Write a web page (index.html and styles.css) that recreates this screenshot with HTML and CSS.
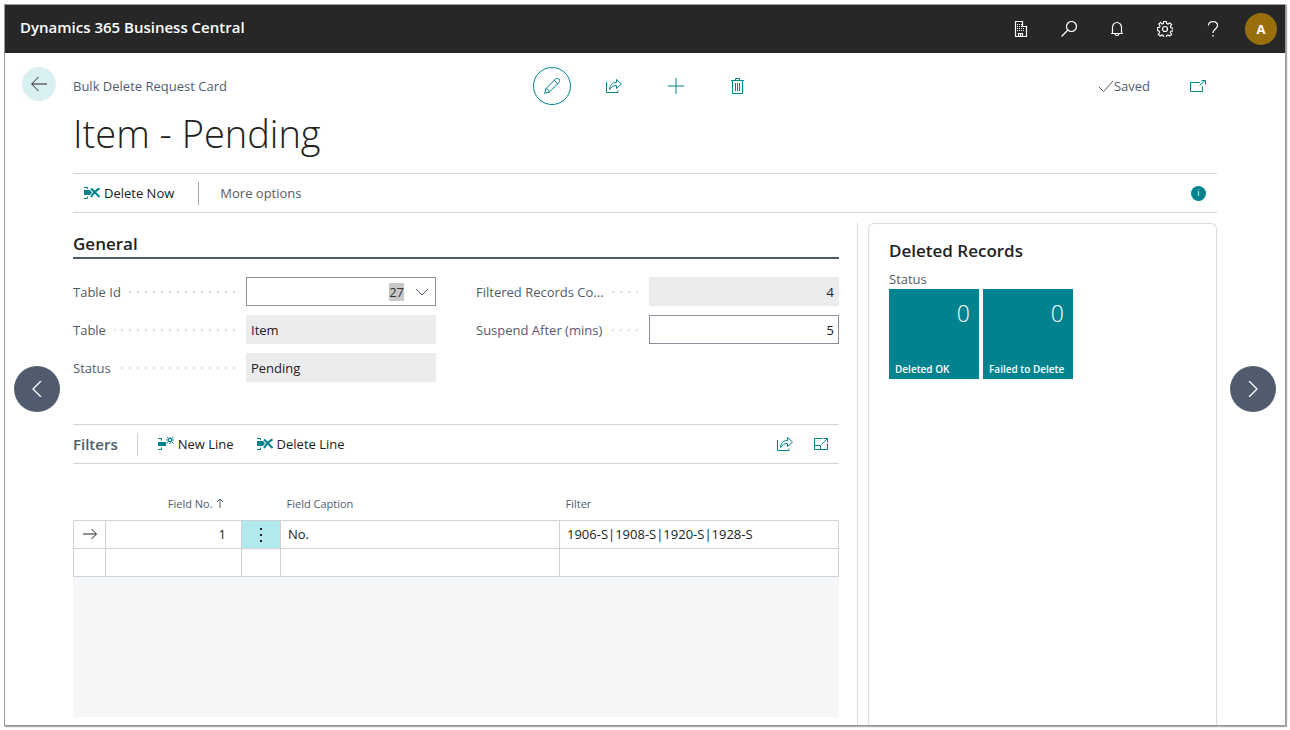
FILE: index.html
```html
<!DOCTYPE html>
<html lang="en">
<head>
  <meta charset="UTF-8">
  <meta name="viewport" content="width=device-width, initial-scale=1">
  <title>Item - Pending - Dynamics 365 Business Central</title>
  <link rel="stylesheet" href="styles.css">
</head>
<body>
  <!-- Shared icons -->
  <svg class="icon-defs" aria-hidden="true">
    <symbol id="icon-share" viewBox="0 0 16 16">
      <path d="M.5 4v10.500h11.500v-2M3.500 11.500c.3-4 2.500-7 7-7V1.500l5 4.500-5 4.500v-3c-3 0-5 1-7 4z"/>
    </symbol>
    <symbol id="icon-delete-line" viewBox="0 0 16 14">
      <path class="fill" d="M0 4h6l2 2.500L6 9H0z"/>
      <path d="M0 1.500h3.500v1.500M0 12.500h3.500V10.500"/>
      <path class="thick" d="M7 2.500l8.500 8.500M15.500 2.500C12 4 9.500 7 7 11"/>
    </symbol>
  </svg>

  <div class="window">
    <header class="topbar">
      <a href="#" class="brand">Dynamics 365 Business Central</a>
      <nav class="topbar-tools">
        <button aria-label="Company">
          <svg viewBox="0 0 16 16"><path d="M2.500 15.500V.5h7v5h4v10zM5.500 15.500v-3h4v3M7.500 12.500v3"/><path class="dots" d="M4 3.500h5M4 5.500h5M4 7.500h8M4 9.500h8"/></svg>
        </button>
        <button aria-label="Search">
          <svg viewBox="0 0 16 16"><circle cx="10.500" cy="5.500" r="5"/><path d="M7 9L.5 15.500"/></svg>
        </button>
        <button aria-label="Notifications">
          <svg viewBox="0 0 16 16"><path d="M2 12.500h12M3.500 12.500V6.500a4.500 5 0 0 1 9 0v6M6 13c.3 2 3.700 2 4 0"/></svg>
        </button>
        <button aria-label="Settings">
          <svg viewBox="0 0 16 16"><path d="M6.700.5h2.600l.4 2.100 1.300.5 1.800-1.200 1.800 1.800-1.200 1.800.5 1.300 2.100.4v2.600l-2.100.4-.5 1.300 1.200 1.800-1.800 1.800-1.800-1.200-1.300.5-.4 2.100H6.700l-.4-2.100-1.300-.5-1.800 1.200-1.800-1.800 1.200-1.800-.5-1.300L.5 9.300V6.700l2-.4.5-1.300-1.200-1.800L3.600 1.400 5 3.100l1.300-.5z"/><circle cx="8" cy="8" r="2.500"/></svg>
        </button>
        <button aria-label="Help">
          <svg viewBox="0 0 16 16"><path d="M3.500 4.500C3.500 2 5.500.6 8 .6s4.500 1.500 4.500 4C12.500 8 8 8 8 12M8 14v1.800"/></svg>
        </button>
        <button aria-label="Account"><span class="avatar">A</span></button>
      </nav>
    </header>

    <div class="page">
      <button class="back" aria-label="Back">
        <svg viewBox="0 0 16 16"><path d="M7.500 1L.7 8l6.800 7M.7 8H16"/></svg>
      </button>
      <button class="pager pager-prev" aria-label="Previous record">
        <svg viewBox="0 0 16 16"><path d="M12 0L4 8l8 8"/></svg>
      </button>
      <button class="pager pager-next" aria-label="Next record">
        <svg viewBox="0 0 16 16"><path d="M4 0l8 8-8 8"/></svg>
      </button>

      <div class="titlebar">
        <span class="caption">Bulk Delete Request Card</span>
        <div class="page-actions">
          <button class="edit" aria-label="Edit">
            <svg viewBox="0 0 16 16"><path d="M.7 15.300l1.200-4.600L11.500 1a2.400 2.400 0 0 1 3.500 3.500L5.300 14.100zM1.900 10.700c1.800.2 3.200 1.600 3.400 3.400M10.200 2.300l3.500 3.500"/></svg>
          </button>
          <button aria-label="Share"><svg><use href="#icon-share"/></svg></button>
          <button aria-label="New"><svg viewBox="0 0 16 16"><path d="M8 0v16M0 8h16"/></svg></button>
          <button aria-label="Delete">
            <svg viewBox="0 0 16 16"><path d="M1 2.500h13M5.500 2.500v-2h4v2M2.500 2.500v13h10v-13M5.500 5v8M7.500 5v8M9.500 5v8"/></svg>
          </button>
        </div>
        <div class="page-state">
          <span class="saved">
            <svg viewBox="0 0 16 16"><path d="M1 9l4.500 4.500L15 3"/></svg>Saved
          </span>
          <button aria-label="Open in new window">
            <svg viewBox="0 0 16 16"><path d="M10 4.500H.5v9h12v-5M9.500 7.500l5.500-5M11.500 2.500h4v4"/></svg>
          </button>
        </div>
      </div>

      <h1>Item - Pending</h1>

      <div class="actionbar">
        <button class="action"><svg><use href="#icon-delete-line"/></svg>Delete Now</button>
        <span class="divider"></span>
        <button class="action more">More options</button>
        <button class="info" aria-label="Toggle FactBox">i</button>
      </div>

      <div class="content">
        <main class="main">
          <h2>General</h2>
          <div class="fields">
            <div class="field-column">
              <div class="field">
                <label for="tableId"><span>Table Id</span></label>
                <div class="lookup">
                  <input id="tableId" class="number" value="27">
                  <button aria-label="Choose a value for Table Id">
                    <svg viewBox="0 0 16 16"><path d="M2 5l6 6 6-6"/></svg>
                  </button>
                </div>
              </div>
              <div class="field">
                <label for="tableName"><span>Table</span></label>
                <input id="tableName" value="Item" readonly>
              </div>
              <div class="field">
                <label for="status"><span>Status</span></label>
                <input id="status" value="Pending" readonly>
              </div>
            </div>
            <div class="field-column">
              <div class="field">
                <label for="recordCount"><span>Filtered Records Co...</span></label>
                <input id="recordCount" class="number" value="4" readonly>
              </div>
              <div class="field">
                <label for="suspendAfter"><span>Suspend After (mins)</span></label>
                <input id="suspendAfter" class="number" value="5">
              </div>
            </div>
          </div>

          <div class="partbar">
            <h3>Filters</h3>
            <span class="divider"></span>
            <button class="action">
              <svg viewBox="0 0 16 14"><path class="fill" d="M0 5h8v4H0z"/><path d="M0 1.500h3.500v2M0 12.500h3.500v-2M10.500 1.500h3v3h-3zM8.500 0l2 1.500M15.500 0l-2 1.500M8.500 6.500l2-2M15.500 6.500l-2-2M12 0v1.500M12 4.500v2.500M8 3h2.500M13.500 3H16"/></svg>New Line
            </button>
            <button class="action"><svg><use href="#icon-delete-line"/></svg>Delete Line</button>
            <div class="part-tools">
              <button aria-label="Share list"><svg><use href="#icon-share"/></svg></button>
              <button aria-label="Focus mode">
                <svg viewBox="0 0 16 16"><path d="M9.500 2.500h-8v11h13v-6M1.500 9.500h6v4M8.500 8.500l6-6M10.500 2.500h4v4"/></svg>
              </button>
            </div>
          </div>

          <table class="lines">
            <colgroup>
              <col class="col-marker"><col class="col-no"><col class="col-menu"><col><col>
            </colgroup>
            <thead>
              <tr>
                <th></th>
                <th class="number">Field No. <svg viewBox="0 0 8 10"><path d="M4 10V1M1 4l3-3 3 3"/></svg></th>
                <th></th>
                <th>Field Caption</th>
                <th>Filter</th>
              </tr>
            </thead>
            <tbody>
              <tr>
                <td class="marker"><svg viewBox="0 0 16 16"><path d="M1 8h13M9.500 3l5 5-5 5"/></svg></td>
                <td class="number">1</td>
                <td class="menu"><button aria-label="Show more options"><svg viewBox="0 0 16 16"><path class="fill" d="M7 2h2v2H7zM7 8h2v2H7zM7 14h2v2H7z"/></svg></button></td>
                <td>No.</td>
                <td>1906-S|1908-S|1920-S|1928-S</td>
              </tr>
              <tr>
                <td></td><td></td><td></td><td></td><td></td>
              </tr>
            </tbody>
          </table>
          <div class="list-space"></div>
        </main>

        <aside class="factbox">
          <h2>Deleted Records</h2>
          <p>Status</p>
          <div class="tiles">
            <a href="#" class="tile"><span class="tile-value">0</span><span class="tile-label">Deleted OK</span></a>
            <a href="#" class="tile"><span class="tile-value">0</span><span class="tile-label">Failed to Delete</span></a>
          </div>
        </aside>
      </div>
    </div>
  </div>

  <script>
    // first editable field starts out selected
    document.getElementById('tableId').select();
  </script>
</body>
</html>
```
FILE: styles.css
```css
* {
  box-sizing: border-box;
}

body {
  margin: 0;
  height: 100vh;
  padding: 4px;
  background: #fff;
  color: #212121;
  font-family: "Segoe UI", "Open Sans", sans-serif;
  font-size: 13px;
  line-height: 20px;
  overflow: hidden;
}

button, input {
  font: inherit;
  color: inherit;
}

button {
  display: flex;
  align-items: center;
  justify-content: center;
  padding: 0;
  border: 0;
  background: none;
  cursor: pointer;
}

svg {
  width: 16px;
  height: 16px;
  flex: none;
  fill: none;
  stroke: currentColor;
  stroke-width: 1;
}

svg .fill {
  fill: currentColor;
  stroke: none;
}

svg .thick {
  stroke-width: 2;
}

svg .dots {
  stroke-dasharray: 1 1;
}

.icon-defs {
  position: absolute;
  width: 0;
  height: 0;
}

.window {
  height: 100%;
  display: flex;
  flex-direction: column;
  border: 1px solid #999;
  box-shadow: 1px 1px 1px #aaa;
  overflow: hidden;
}

/* Top bar */
.topbar {
  display: flex;
  flex: none;
  height: 48px;
  align-items: center;
  justify-content: space-between;
  padding-left: 15px;
  background: #272727;
  color: #fff;
}

.brand {
  padding-bottom: 4px;
  color: inherit;
  font-size: 15px;
  font-weight: 600;
  text-decoration: none;
}

.topbar-tools {
  display: flex;
}

.topbar-tools button {
  width: 48px;
  height: 48px;
}

.topbar-tools svg {
  stroke-width: 1.2;
}

.avatar {
  width: 32px;
  line-height: 32px;
  border-radius: 50%;
  background: #986f0b;
  font-weight: 700;
}

/* Page */
.page {
  position: relative;
  flex: 1;
  min-height: 0;
  display: flex;
  flex-direction: column;
  padding: 14px 68px 0;
}

.back {
  position: absolute;
  top: 14px;
  left: 17px;
  width: 34px;
  height: 34px;
  border-radius: 50%;
  background: #d9f0f2;
}

.pager {
  position: absolute;
  top: 50%;
  width: 46px;
  height: 46px;
  margin-top: -23px;
  border-radius: 50%;
  background: #505c6d;
  color: #fff;
}

.pager svg {
  stroke-width: 1.3;
}

.pager-prev {
  left: 9px;
}

.pager-next {
  right: 9px;
}

.titlebar {
  display: grid;
  grid-template-columns: 1fr auto 1fr;
  align-items: center;
}

.caption, .saved {
  color: #505c6d;
}

.page-actions {
  display: flex;
  gap: 24px;
  color: #00838c;
}

.page-actions button {
  width: 38px;
  height: 38px;
}

.page-actions .edit {
  border: 1px solid #00838c;
  border-radius: 50%;
}

.page-state {
  display: flex;
  align-items: center;
  justify-content: flex-end;
  gap: 40px;
  padding-right: 11px;
  color: #00838c;
}

.saved {
  display: flex;
  align-items: center;
}

h1 {
  margin: 2px 0 14px;
  font-size: 38px;
  font-weight: 300;
  line-height: 52px;
}

.actionbar, .partbar {
  display: flex;
  flex: none;
  height: 40px;
  align-items: center;
  border-top: 1px solid #d0d3d7;
  border-bottom: 1px solid #d0d3d7;
}

.actionbar {
  padding: 0 11px;
}

.action {
  gap: 4px;
}

.action svg {
  height: 14px;
  color: #00838c;
}

.more {
  color: #505c6d;
}

.divider {
  width: 1px;
  height: 23px;
  background: #a0a7b1;
}

.actionbar .divider {
  margin: 0 21px 0 24px;
}

.info {
  width: 15px;
  height: 15px;
  margin-left: auto;
  border-radius: 50%;
  background: #00838c;
  color: #fff;
  font-size: 9px;
}

.content {
  flex: 1;
  min-height: 0;
  display: grid;
  grid-template-columns: minmax(0, 1fr) 349px;
  gap: 10px;
  padding-top: 10px;
}

.main {
  display: flex;
  flex-direction: column;
  padding-right: 18px;
  border-right: 1px solid #d9dce0;
}

h2 {
  margin: 0;
  font-size: 17px;
  font-weight: 600;
  line-height: 24px;
}

.main h2 {
  padding: 9px 0 1px;
  border-bottom: 2px solid #505c6d;
}

/* Fields */
.fields {
  display: grid;
  grid-template-columns: 1fr 1fr;
  gap: 40px;
  padding: 18px 0 42px;
}

.field-column {
  display: flex;
  flex-direction: column;
  gap: 9px;
}

.field {
  display: grid;
  grid-template-columns: minmax(0, 1fr) 190px;
  align-items: center;
}

.field label {
  display: flex;
  align-items: center;
  gap: 8px;
  padding-right: 11px;
  color: #505c6d;
  white-space: nowrap;
}

.field label::after {
  content: "";
  flex: 1;
  height: 2px;
  background: linear-gradient(to left, #d9dce0 2px, transparent 2px) right / 8px 2px repeat-x;
}

.field input {
  width: 100%;
  height: 29px;
  padding: 0 4px;
  border: 1px solid #8a919d;
  border-radius: 0;
  background: #fff;
  outline: none;
}

.field input[readonly] {
  border-color: #ebecee;
  background: #ebecee;
}

.number {
  text-align: right;
}

.lookup {
  display: flex;
  border: 1px solid #8a919d;
}

.field .lookup input {
  flex: 1;
  min-width: 0;
  height: 27px;
  border: 0;
}

.lookup input::selection {
  background: #c8c8c8;
  color: #333;
}

.lookup button {
  width: 27px;
  color: #505c6d;
}

/* Filters part */
.partbar h3 {
  margin: 0;
  color: #505c6d;
  font-size: 15px;
  font-weight: 600;
}

.partbar .divider {
  margin: 0 20px 0 19px;
  background: #d0d3d7;
}

.partbar .action + .action {
  margin-left: 23px;
}

.part-tools {
  display: flex;
  gap: 20px;
  margin-left: auto;
  padding-right: 10px;
  color: #00838c;
}

.lines {
  width: 100%;
  margin-top: 25px;
  border-collapse: collapse;
  table-layout: fixed;
}

.col-marker {
  width: 32px;
}

.col-no {
  width: 136px;
}

.col-menu {
  width: 39px;
}

.lines th {
  height: 31px;
  padding: 0 6px;
  color: #505c6d;
  font-size: 11px;
  font-weight: 400;
  text-align: left;
}

.lines th svg {
  width: 8px;
  height: 10px;
}

.lines td {
  height: 28px;
  padding: 0 7px;
  border: 1px solid #d0d3d7;
}

.lines .number {
  padding-right: 15px;
  text-align: right;
}

.lines th.number {
  padding-right: 18px;
}

.lines .marker, .lines .menu {
  padding: 0;
}

.lines .marker svg {
  display: block;
  margin: auto;
}

.lines .menu {
  background: #b2e9ec;
}

.menu button {
  width: 100%;
}

.list-space {
  flex: 1;
  margin-bottom: 8px;
  background: #f5f6f8;
}

/* FactBox */
.factbox {
  padding: 15px 20px;
  border: 1px solid #d9dce0;
  border-bottom: 0;
  border-radius: 6px 6px 0 0;
}

.factbox p {
  margin: 6px 0 0;
  color: #505c6d;
}

.tiles {
  display: flex;
  gap: 4px;
}

.tile {
  display: flex;
  flex-direction: column;
  justify-content: space-between;
  width: 90px;
  height: 90px;
  padding: 8px 0 0 6px;
  background: #00838f;
  color: #fff;
  text-decoration: none;
}

.tile-value {
  padding-right: 9px;
  font-size: 23px;
  font-weight: 300;
  line-height: 32px;
  text-align: right;
}

.tile-label {
  font-size: 10px;
  font-weight: 600;
  white-space: nowrap;
}
```
